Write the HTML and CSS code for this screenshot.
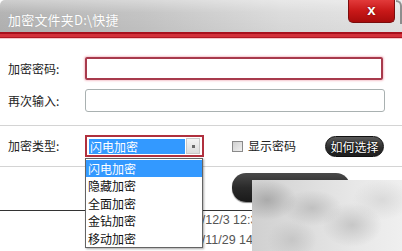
FILE: index.html
```html
<!DOCTYPE html>
<html lang="zh">
<head>
<meta charset="utf-8">
<link rel="stylesheet" href="styles.css">
</head>
<body>
<div class="window">
  <div class="titlebar">
    <span class="title">加密文件夹D:\快捷</span>
    <span class="close">x</span>
  </div>
  <div class="redband"></div>
  <div class="form">
    <div class="row row1">
      <span class="label">加密密码:</span>
      <span class="input input-focus"></span>
    </div>
    <div class="row row2">
      <span class="label">再次输入:</span>
      <span class="input input-plain"></span>
    </div>
    <div class="sep sep1"></div>
    <div class="row row3">
      <span class="label">加密类型:</span>
      <span class="select">
        <span class="select-value">闪电加密</span>
        <span class="select-btn"><span class="dot"></span></span>
      </span>
      <span class="check"></span>
      <span class="check-label">显示密码</span>
      <span class="pill">如何选择</span>
    </div>
    <div class="sep sep2"></div>
    <div class="actions">
      <span class="bigbtn"></span>
    </div>
    <div class="table">
      <div class="trow">2013/12/3 12:30</div>
      <div class="trow">2013/11/29 14:20</div>
    </div>
  </div>
  <ul class="dropdown">
    <li class="on">闪电加密</li>
    <li>隐藏加密</li>
    <li>全面加密</li>
    <li>金钻加密</li>
    <li>移动加密</li>
  </ul>
  <div class="watermark"></div>
  <div class="corner"></div>
</div>
</body>
</html>
```

FILE: styles.css
```css
* { box-sizing: border-box; margin: 0; padding: 0; }
html, body { width: 402px; height: 251px; overflow: hidden; background: #fff; }
body { font-family: "Noto Sans CJK SC", "Liberation Sans", sans-serif; font-size: 12px; color: #222; }

.window { position: relative; width: 402px; height: 251px; overflow: hidden; background: #fff; }

.titlebar {
  height: 32px;
  display: flex;
  align-items: flex-start;
  justify-content: space-between;
  background:
    linear-gradient(to bottom, rgba(255,255,255,0.35) 0, rgba(255,255,255,0) 40%, rgba(0,0,0,0.03) 100%),
    linear-gradient(to right, #b4b4b4 0, #c4c4c4 35%, #dcdcdc 70%, #e4e4e4 100%);
  border-top-left-radius: 5px;
  padding: 11px 7px 0 8px;
}
.title {
  color: #fff;
  font-size: 13px;
  line-height: 18px;
  letter-spacing: 0.2px;
  text-shadow: 0 0 1px rgba(90,90,90,0.7), 0 0 1px rgba(255,255,255,0.8);
}
.close {
  margin-top: -11px;
  width: 47px;
  height: 23px;
  background: linear-gradient(to bottom, #e23a3a 0, #c81818 50%, #a80c0c 100%);
  border: 1px solid #7a0d0d;
  border-top: none;
  border-radius: 0 0 5px 5px;
  color: #fff;
  font-family: "Liberation Sans", sans-serif;
  font-weight: bold;
  font-size: 15px;
  line-height: 20px;
  text-align: center;
  text-shadow: 0 0 2px #600;
}

.redband {
  height: 7px;
  background: linear-gradient(to bottom, #a8101c 0, #a8101c 2px, #d2303a 2px, #d2303a 5px, #b01822 5px, #b01822 6px, #f4c8cc 6px);
}

.form { padding-top: 18px; }
.row { display: flex; align-items: center; }
.label { width: 85px; padding-left: 8px; font-size: 12px; line-height: 16px; color: #222; }

.input { display: block; height: 23px; }
.input-focus {
  width: 298px;
  border: 2px solid #a83a4c;
  border-radius: 2px;
  box-shadow: 0 0 2px 1px #f6c6cf;
}
.input-plain {
  width: 300px;
  border: 1px solid #a9b1b1;
  border-radius: 3px;
}
.row2 { margin-top: 9px; }

.sep { height: 1px; background: #d4d4d4; }
.sep1 { margin-top: 13px; }
.row3 { margin-top: 9px; height: 22px; }
.sep2 { margin-top: 9px; }

.select {
  display: flex;
  align-items: center;
  width: 119px;
  height: 22px;
  border: 2px solid #b0303e;
  padding: 0 2px 0 2px;
  background: #fff;
}
.select-value {
  display: block;
  width: 96px;
  height: 15px;
  background: #3399ff;
  color: #fff;
  font-size: 12px;
  line-height: 15px;
  padding-left: 1px;
}
.select-btn {
  display: flex;
  align-items: center;
  justify-content: center;
  width: 14px;
  height: 16px;
  margin-left: 1px;
  background: linear-gradient(to bottom, #f4f4f4, #dcdcdc);
  border: 1px solid #c8c8c8;
}
.dot { width: 3px; height: 3px; background: #6a6a6a; }

.check {
  display: block;
  width: 11px;
  height: 11px;
  margin-left: 28px;
  border: 1px solid #8a8a8a;
  background: linear-gradient(135deg, #d0d0d0, #f0f0f0);
}
.check-label { margin-left: 5px; font-size: 12px; line-height: 16px; color: #222; }
.pill {
  margin-left: 29px;
  display: block;
  width: 59px;
  height: 21px;
  border-radius: 11px;
  background: linear-gradient(to bottom, #5a5a5a 0, #2e2e2e 55%, #1e1e1e 100%);
  border: 1px solid #111;
  color: #fff;
  font-size: 12px;
  line-height: 19px;
  text-align: center;
  text-shadow: 0 0 2px #000, 0 0 1px #000;
}

.actions { height: 43px; padding: 6px 0 0 232px; }
.bigbtn {
  display: block;
  width: 118px;
  height: 29px;
  border-radius: 14px;
  background: linear-gradient(to bottom, #4a4a4a 0, #2a2a2a 50%, #1a1a1a 100%);
  box-shadow: 0 1px 1px #888;
}

.table { border-top: 1px solid #333; width: 252px; padding-left: 174px; }
.trow {
  height: 20px;
  line-height: 20px;
  font-family: "Liberation Sans", sans-serif;
  font-size: 12.5px;
  color: #555;
  white-space: nowrap;
  overflow: hidden;
}
.trow:first-child { margin-top: -1px; }

.dropdown {
  position: absolute;
  left: 85px;
  top: 158px;
  width: 118px;
  height: 90px;
  list-style: none;
  background: #fff;
  border: 1px solid #646464;
  box-shadow: 1px 1px 2px rgba(0,0,0,0.35);
  padding-top: 1px;
}
.dropdown li {
  height: 17.4px;
  line-height: 17.4px;
  padding-left: 2px;
  font-size: 12px;
  color: #111;
}
.dropdown li.on { background: #3399ff; color: #fff; }

.watermark {
  position: absolute;
  left: 252px;
  top: 180px;
  width: 150px;
  height: 71px;
  background:
    radial-gradient(ellipse 30px 20px at 15px 20px, rgba(160,160,160,0.8), rgba(160,160,160,0) 100%),
    radial-gradient(ellipse 30px 18px at 60px 28px, rgba(180,180,180,0.7), rgba(180,180,180,0) 100%),
    radial-gradient(ellipse 30px 22px at 100px 45px, rgba(185,185,185,0.7), rgba(185,185,185,0) 100%),
    radial-gradient(ellipse 25px 20px at 40px 60px, rgba(190,190,190,0.7), rgba(190,190,190,0) 100%),
    radial-gradient(ellipse 30px 20px at 130px 20px, rgba(205,205,205,0.6), rgba(205,205,205,0) 100%),
    linear-gradient(to right, #d0d0d0 0, #dedede 40%, #e8e8e8 70%, #efefef 100%);
}

.corner {
  position: absolute;
  right: 0;
  top: 0;
  width: 6px;
  height: 24px;
  border-right: 2px solid #555;
  border-top: 2px solid #555;
  border-top-right-radius: 6px;
  opacity: 0.6;
}
```
